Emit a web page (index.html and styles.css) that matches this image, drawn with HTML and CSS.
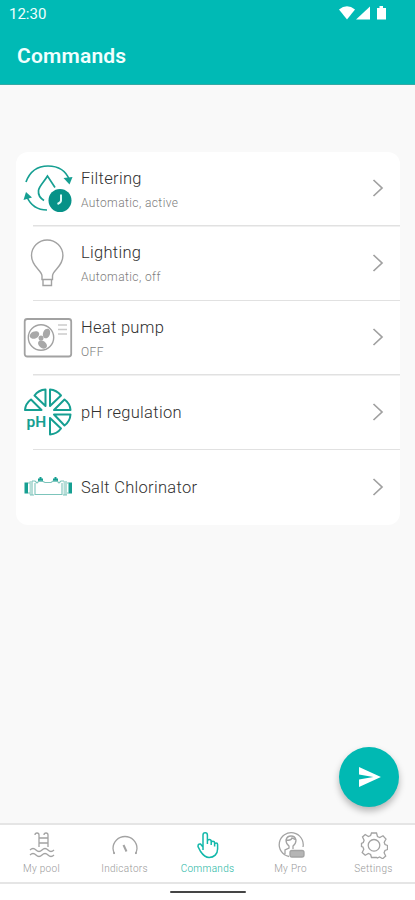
FILE: index.html
```html
<!DOCTYPE html>
<html lang="en">
<head>
<meta charset="utf-8">
<meta name="viewport" content="width=device-width, initial-scale=1">
<title>Commands</title>
<link rel="stylesheet" href="styles.css">
</head>
<body>
<div class="screen">
  <header class="header">
    <div class="status">
      <span class="clock">12:30</span>
      <svg class="status-icons" viewBox="0 0 48 16" width="48" height="16">
        <path d="M0 4.500Q8 -2 16 4.500L8 14.500Z"/>
        <path d="M17 14.500L31 1.500V14.500Z"/>
        <path d="M38 3h2.500V1h3.500v2H47v11.500h-9Z"/>
      </svg>
    </div>
    <h1 class="title">Commands</h1>
  </header>

  <main class="content">
    <ul class="card">
      <li class="row">
        <svg class="icon teal" viewBox="0 0 50 50">
          <path d="M3 18C7 7 15 2 25 2c10 0 18 5 21.500 14"/>
          <path class="fill" d="M40.500 14L46.500 20.500L49.500 13Z"/>
          <path d="M4 33c4 9 12 13 20 13"/>
          <path class="fill" d="M.5 36L3 28L9 33.500Z"/>
          <path d="M21 36.500C17 34 15 31 15.500 26.500C16 22 21 18 24.500 12L32 23.500"/>
          <circle class="disc" cx="37" cy="36.500" r="11.500"/>
          <path class="hand" d="M38 30.500v6q0 2-3.500 3.500"/>
        </svg>
        <div class="label"><span class="name">Filtering</span><span class="state">Automatic, active</span></div>
        <svg class="chevron" viewBox="0 0 12 18"><path d="M1.500 1L10 9L1.500 17"/></svg>
      </li>
      <li class="row">
        <svg class="icon gray" viewBox="0 0 50 50">
          <path d="M19 40.500V37c0-6-10.500-9-10.500-20.500a15.700 15.500 0 0 1 31.400 0C40 28 29.500 31 29.500 37v3.500ZM20 41v5.500h8.500V41"/>
        </svg>
        <div class="label"><span class="name">Lighting</span><span class="state">Automatic, off</span></div>
        <svg class="chevron" viewBox="0 0 12 18"><path d="M1.500 1L10 9L1.500 17"/></svg>
      </li>
      <li class="row">
        <svg class="icon gray" viewBox="0 0 50 50">
          <rect class="thick" x="1.700" y="6" width="46.500" height="37.500" rx="2.500"/>
          <circle cx="18" cy="24.500" r="12.700"/>
          <g class="blades">
            <ellipse cx="11.500" cy="22" rx="5" ry="3.500" transform="rotate(-25 11.500 22)"/>
            <ellipse cx="23.500" cy="20.500" rx="5" ry="3.500" transform="rotate(-70 23.500 20.500)"/>
            <ellipse cx="19.500" cy="31.500" rx="5" ry="3.500" transform="rotate(38 19.500 31.500)"/>
            <circle cx="18" cy="25" r="2.500"/>
          </g>
          <path class="faint" d="M35 12h9M35 16.500h9M35 21h9"/>
        </svg>
        <div class="label"><span class="name">Heat pump</span><span class="state">OFF</span></div>
        <svg class="chevron" viewBox="0 0 12 18"><path d="M1.500 1L10 9L1.500 17"/></svg>
      </li>
      <li class="row">
        <svg class="icon teal" viewBox="0 0 50 50">
          <g class="wedges">
            <path d="M2 22H18.500L8 11.500Q2.500 15.500 2 22Z"/>
            <path d="M11.500 7.500L22.500 18V1.500Q15.500 2 11.500 7.500Z"/>
            <path d="M27 1.500V18L38 7.500Q33.500 2 27 1.500Z"/>
            <path d="M31 22H47.500Q47 15.500 41.500 11.500Z"/>
            <path d="M31 26.500H47.500Q47 33.500 41.500 37.500Z"/>
            <path d="M27 30V46.500Q34 46 38 40.500Z"/>
          </g>
          <text class="ph" x="3.500" y="39">pH</text>
        </svg>
        <div class="label"><span class="name">pH regulation</span></div>
        <svg class="chevron" viewBox="0 0 12 18"><path d="M1.500 1L10 9L1.500 17"/></svg>
      </li>
      <li class="row">
        <svg class="icon teal" viewBox="0 0 50 50">
          <path class="fill" d="M1.500 19.500H5v11H1.500ZM45.500 19.500H49v11H45.500ZM15 18.500V15.500h1.500V14h2v1.500H20v3ZM30 18.500V15.500h1.500V14h2v1.500H35v3Z"/>
          <path class="pale" d="M6.500 18h3.500v14H6.500ZM40.500 18H44v14h-3.500Z"/>
          <path class="pipe" d="M12 20V31.500H39V20M9 18h3l2 2 2-2h3l3 1.500H28l2-1.500h4l2 2 2-2h3M5 20h2M44 20h2M5 30h2M44 30h2M7 32h4M40 32h4"/>
        </svg>
        <div class="label"><span class="name">Salt Chlorinator</span></div>
        <svg class="chevron" viewBox="0 0 12 18"><path d="M1.500 1L10 9L1.500 17"/></svg>
      </li>
    </ul>
    <button class="fab" aria-label="Send">
      <svg viewBox="0 0 24 21" width="23" height="20"><path d="M1 0L24 10.500L1 21V13L16 10.500L1 8Z"/></svg>
    </button>
  </main>

  <nav class="tabs">
    <a class="tab">
      <svg viewBox="0 0 28 28"><path d="M7 4q0-2 2-2t2 2V16M16 4q0-2 2-2t2 2V16M11 7h9M11 12h9M2 19q3-3 6 0t6 0t6 0t6 0M2 24q3-3 6 0t6 0t6 0t6 0"/></svg>
      <span>My pool</span>
    </a>
    <a class="tab">
      <svg viewBox="0 0 28 28"><path d="M3.500 23Q2 19 2 17.500a12 12 0 0 1 24 0Q26 19 24.500 23M2 22h2M24 22h2"/><path class="needle" d="M12.500 14l3 6.500"/></svg>
      <span>Indicators</span>
    </a>
    <a class="tab active">
      <svg viewBox="0 0 28 28"><path d="M9 16V4a2.200 2.200 0 0 1 4.400 0V13V10.500a1.900 1.900 0 0 1 3.800 0V14V12a1.700 1.700 0 0 1 3.400 0V15.500V13.500a1.500 1.500 0 0 1 3 0V18c0 5-3.500 8.500-8.500 8.500c-4 0-6.500-3-8.500-6L4 15.500q0-3 2.500-2.500L9 16v3"/></svg>
      <span>Commands</span>
    </a>
    <a class="tab">
      <svg viewBox="0 0 28 28"><path d="M12 25.500A12 12 0 1 1 26 16M8 23V19l4-2V15Q9 13 9 9q1-4 5-4t5 4q0 4-3 6v3M9 9q5 1 6-2l4 2"/><rect class="badge" x="13" y="19.500" width="14" height="6.500" rx="2"/></svg>
      <span>My Pro</span>
    </a>
    <a class="tab">
      <svg viewBox="0 0 28 28"><path d="M11.500 2h5l1 3.500 2.200 1 3.300-1.800 3 3.300-1.800 3.300.8 2.200 2.500 1v4l-2.500 1-.9 2.200 1.600 3.300-3 2.700-3.100-1.700-2.200 1L16.500 26.500h-5l-.9-3-2.200-1-3.200 1.700-3-2.700 1.600-3.300-.9-2.200L1.500 15.500v-3l1.800-1 .8-2.200L2.500 6 5.200 3.500l3.200 2 2.200-1Z"/><circle cx="14" cy="14.300" r="5.800"/></svg>
      <span>Settings</span>
    </a>
  </nav>
  <footer class="gesture"><div class="pill"></div></footer>
</div>
</body>
</html>
```

FILE: styles.css
```css
* { box-sizing: border-box; }
body { margin: 0; font-family: Roboto, "Liberation Sans", sans-serif; background: #fff; }
.screen { width: 415px; height: 900px; display: flex; flex-direction: column; overflow: hidden; }
svg { display: block; fill: none; flex: none; }

.header { height: 85px; background: #00bab5; color: #f1fffe; border-bottom: 1px solid #35aaa5; }
.status { height: 28px; padding: 0 28px 0 9px; display: flex; align-items: center; justify-content: space-between; }
.clock { font-size: 15px; line-height: 28px; }
.status-icons { fill: #fff; margin-top: -3px; }
.title { margin: 15px 0 0 17px; font-size: 21px; line-height: 26px; font-weight: 600; letter-spacing: .2px; }

.content { flex: 1; min-height: 0; background: #f9f9f9; padding: 67px 15px 0 16px; display: flex; flex-direction: column; justify-content: space-between; }
.card { list-style: none; margin: 0; padding: 0; height: 373px; background: #fff; border-radius: 12px; display: grid; grid-template-rows: repeat(5, 1fr); }
.row { display: flex; align-items: center; padding: 0 16px 0 7px; background: linear-gradient(#e1e1e1, #e1e1e1) 17px 100% / 100% 1.500px no-repeat; }
.row:last-child { background: none; }
.icon { width: 50px; height: 50px; stroke-width: 1.700; }
.teal { stroke: #169f92; }
.gray { stroke: #a2a2a2; stroke-width: 1.400; }
.fill { fill: #169f92; stroke: none; }
.disc { fill: #079288; stroke: none; }
.hand { stroke: #dffcf8; stroke-width: 2; }
.thick { stroke-width: 1.800; }
.blades { fill: #a8a8a8; stroke: none; }
.faint { stroke: #cbcbcb; stroke-width: 1.500; }
.wedges { stroke-width: 2; stroke-linejoin: round; }
.ph { fill: #169f92; stroke: none; font-size: 15.500px; font-weight: 600; }
.pale { fill: #b5ddd7; stroke: none; }
.pipe { stroke: #7cc4bb; stroke-width: 1.100; }
.label { flex: 1; margin-left: 8px; display: flex; flex-direction: column; }
.name { font-size: 16.500px; line-height: 22px; color: #303030; font-weight: 350; letter-spacing: .3px; }
.state { margin-top: 3px; margin-bottom: -2px; font-size: 12px; line-height: 20px; color: #7d7d7d; font-weight: 300; letter-spacing: .4px; }
.chevron { width: 12px; height: 18px; margin-top: -2px; stroke: #a0a0a0; stroke-width: 1.700; }
.fab { align-self: flex-end; width: 60px; height: 60px; margin: 0 1px 16px 0; padding: 0; border: 0; border-radius: 50%; background: #00b9b3; display: grid; place-items: center; box-shadow: 0 4px 7px rgba(0,0,0,.28); }
.fab svg { fill: #fff; }

.tabs { height: 61px; display: grid; grid-template-columns: repeat(5, 1fr); border-top: 2px solid #e5e5e5; border-bottom: 2px solid #e5e5e5; background: #fff; }
.tab { display: flex; flex-direction: column; align-items: center; padding-top: 6px; font-size: 10px; line-height: 14px; font-weight: 300; color: #999; letter-spacing: .3px; }
.tab svg { width: 28px; height: 28px; stroke: #a3a3a3; stroke-width: 1.300; }
.tab span { margin-top: 3px; }
.tab .needle { stroke-width: 2; }
.tab .badge { fill: #b5b5b5; }
.tab.active { color: #22b5a2; }
.tab.active svg { stroke: #12b8aa; stroke-width: 1.500; }
.gesture { height: 16px; padding-top: 7px; }
.pill { width: 76px; height: 2px; margin: 0 auto; background: #454545; border-radius: 1px; }
```
